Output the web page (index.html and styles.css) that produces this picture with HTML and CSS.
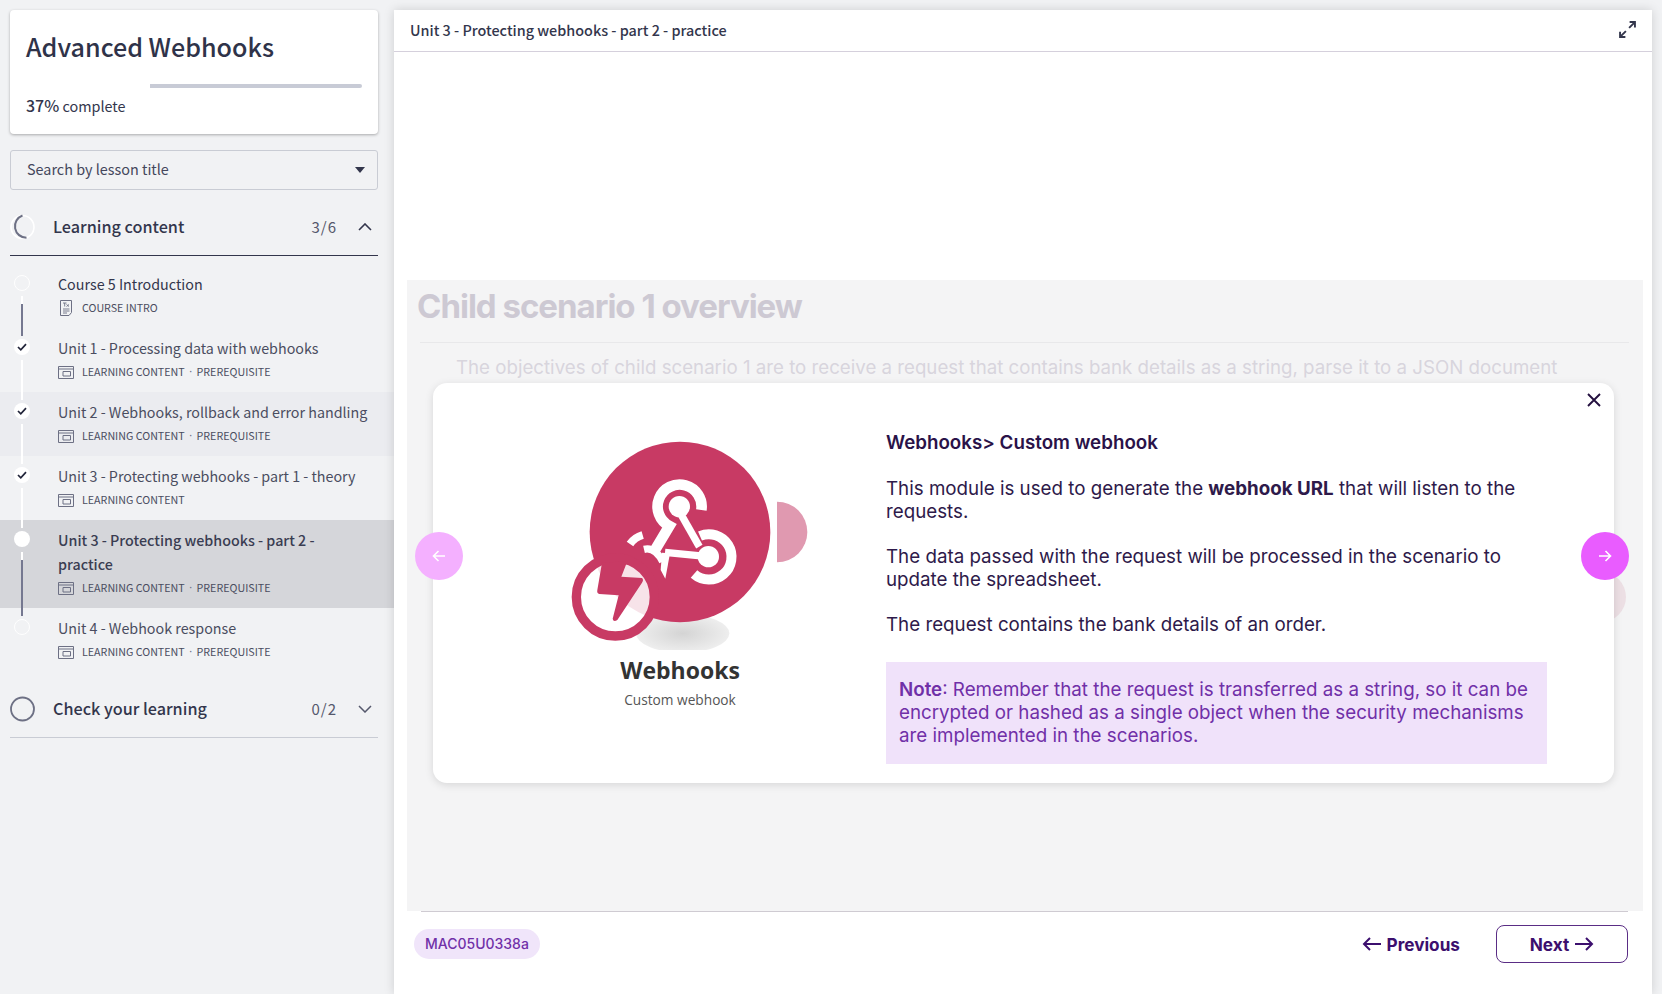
FILE: index.html
```html
<!DOCTYPE html>
<html lang="en">
<head>
    <meta charset="UTF-8">
    <meta name="viewport" content="width=device-width, initial-scale=1.0">
    <title>Advanced Webhooks</title>
    <link rel="stylesheet" href="styles.css">
</head>
<body>
    <aside class="sidebar">
        <div class="course-card">
            <h1>Advanced Webhooks</h1>
            <div class="progress"><div class="progress-done"></div><div class="progress-left"></div></div>
            <p class="progress-text"><b>37%</b> complete</p>
        </div>

        <div class="search-box">
            <span>Search by lesson title</span>
            <span class="search-caret"></span>
        </div>

        <div class="section-head section-open">
            <svg class="section-ring" width="26" height="26" viewBox="0 0 26 26"><circle cx="12.500" cy="13" r="11.5" fill="none" stroke="#fff" stroke-width="1.6"/><path d="M16.500 23.800A11.500 11.500 0 0 1 12.500 1.500" fill="none" stroke="#6d7084" stroke-width="2"/></svg>
            <span class="section-title">Learning content</span>
            <span class="section-count">3/6</span>
            <svg class="chevron" width="14" height="8" viewBox="0 0 14 8"><path d="M1 7l6-6 6 6" fill="none" stroke="#33364c" stroke-width="1.6"/></svg>
        </div>

        <ul class="lessons">
            <li class="lesson">
                <div class="rail"><span class="dot dot-empty"></span><span class="rail-line line-next"></span></div>
                <div class="lesson-body">
                    <div class="lesson-title lesson-title-dark">Course 5 Introduction</div>
                    <div class="lesson-meta">
                        <svg class="meta-icon" width="16" height="16" viewBox="0 0 16 16"><path d="M2.5.5h11v12l-2.500 3h-8.500z" fill="none" stroke="#6d7084"/><path d="M5 3h3.500M6.700 3v3.500M8.500 4.500l2.500 2M11 4.500l-2.500 2M5 9h6.500M5 11h6.500M5 13h4" fill="none" stroke="#6d7084" stroke-width=".9"/></svg>
                        <span>COURSE INTRO</span>
                    </div>
                </div>
            </li>
            <li class="lesson">
                <div class="rail"><span class="dot"><svg width="10" height="8" viewBox="0 0 10 8"><path d="M1 4l2.800 2.800L9 1.200" fill="none" stroke="#22253a" stroke-width="1.700"/></svg></span><span class="rail-line"></span></div>
                <div class="lesson-body">
                    <div class="lesson-title">Unit 1 - Processing data with webhooks</div>
                    <div class="lesson-meta">
                        <svg class="meta-icon" width="16" height="13" viewBox="0 0 16 13"><path d="M.5.500h15v12H.500zM.5 3h15M5 5.500h7.500V10H5z" fill="none" stroke="#6d7084"/></svg>
                        <span>LEARNING CONTENT</span><span class="meta-sep">·</span><span>PREREQUISITE</span>
                    </div>
                </div>
            </li>
            <li class="lesson lesson-hover">
                <div class="rail"><span class="dot"><svg width="10" height="8" viewBox="0 0 10 8"><path d="M1 4l2.800 2.800L9 1.200" fill="none" stroke="#22253a" stroke-width="1.700"/></svg></span><span class="rail-line"></span></div>
                <div class="lesson-body">
                    <div class="lesson-title">Unit 2 - Webhooks, rollback and error handling</div>
                    <div class="lesson-meta">
                        <svg class="meta-icon" width="16" height="13" viewBox="0 0 16 13"><path d="M.5.500h15v12H.500zM.5 3h15M5 5.500h7.500V10H5z" fill="none" stroke="#6d7084"/></svg>
                        <span>LEARNING CONTENT</span><span class="meta-sep">·</span><span>PREREQUISITE</span>
                    </div>
                </div>
            </li>
            <li class="lesson">
                <div class="rail"><span class="dot"><svg width="10" height="8" viewBox="0 0 10 8"><path d="M1 4l2.800 2.800L9 1.200" fill="none" stroke="#22253a" stroke-width="1.700"/></svg></span><span class="rail-line"></span></div>
                <div class="lesson-body">
                    <div class="lesson-title">Unit 3 - Protecting webhooks - part 1 - theory</div>
                    <div class="lesson-meta">
                        <svg class="meta-icon" width="16" height="13" viewBox="0 0 16 13"><path d="M.5.500h15v12H.500zM.5 3h15M5 5.500h7.500V10H5z" fill="none" stroke="#6d7084"/></svg>
                        <span>LEARNING CONTENT</span>
                    </div>
                </div>
            </li>
            <li class="lesson lesson-active">
                <div class="rail"><span class="dot"></span><span class="rail-line line-next line-long"></span></div>
                <div class="lesson-body">
                    <div class="lesson-title">Unit 3 - Protecting webhooks - part 2 -<br>practice</div>
                    <div class="lesson-meta">
                        <svg class="meta-icon" width="16" height="13" viewBox="0 0 16 13"><path d="M.5.500h15v12H.500zM.5 3h15M5 5.500h7.500V10H5z" fill="none" stroke="#6d7084"/></svg>
                        <span>LEARNING CONTENT</span><span class="meta-sep">·</span><span>PREREQUISITE</span>
                    </div>
                </div>
            </li>
            <li class="lesson">
                <div class="rail"><span class="dot dot-empty"></span></div>
                <div class="lesson-body">
                    <div class="lesson-title">Unit 4 - Webhook response</div>
                    <div class="lesson-meta">
                        <svg class="meta-icon" width="16" height="13" viewBox="0 0 16 13"><path d="M.5.500h15v12H.500zM.5 3h15M5 5.500h7.500V10H5z" fill="none" stroke="#6d7084"/></svg>
                        <span>LEARNING CONTENT</span><span class="meta-sep">·</span><span>PREREQUISITE</span>
                    </div>
                </div>
            </li>
        </ul>

        <div class="section-head">
            <svg class="section-ring" width="26" height="26" viewBox="0 0 26 26"><circle cx="12.500" cy="13" r="11.500" fill="none" stroke="#6d7084" stroke-width="1.800"/></svg>
            <span class="section-title">Check your learning</span>
            <span class="section-count">0/2</span>
            <svg class="chevron" width="14" height="8" viewBox="0 0 14 8"><path d="M1 1l6 6 6-6" fill="none" stroke="#55586c" stroke-width="1.500"/></svg>
        </div>
    </aside>

    <main class="content">
        <header class="content-head">
            <span>Unit 3 - Protecting webhooks - part 2 - practice</span>
            <svg width="17" height="17" viewBox="0 0 16 16"><path d="M9.500 6.500L15 1M10 1h5v5M6.500 9.500L1 15M1 10v5h5" fill="none" stroke="#33364c" stroke-width="1.800"/></svg>
        </header>

        <div class="content-gap"></div>

        <section class="slide">
            <h2>Child scenario 1 overview</h2>
            <hr class="slide-rule">
            <p class="slide-text">The objectives of child scenario 1 are to receive a request that contains bank details as a string, parse it to a JSON document</p>
            <span class="hidden-marker"></span>

            <div class="modal">
                <div class="modal-left">
                    <svg class="webhook-art" width="280" height="230" viewBox="0 0 840 690">
                        <defs>
                            <radialGradient id="shadow"><stop offset="0" stop-color="#d4d4d4"/><stop offset="1" stop-color="#eeeeee"/></radialGradient>
                        </defs>
                        <ellipse cx="428" cy="640" rx="140" ry="58" fill="url(#shadow)"/>
                        <path d="M711 245A91 91 0 0 1 711 427Z" fill="#e099b0"/>
                        <circle cx="420" cy="336" r="271" fill="#c83a64"/>
                        <g fill="none" stroke="#fff">
                            <path d="M484 270A66 66 0 1 0 388 318L345 390" stroke-width="32"/>
                            <path d="M410 260L478 380" stroke-width="22"/>
                            <path d="M480 348A68 68 0 1 1 462 462" stroke-width="30"/>
                            <path d="M505 410L375 397" stroke-width="22"/>
                            <path d="M270 372A70 70 0 0 1 308 345" stroke-width="24"/>
                            <path d="M312 388Q345 380 368 425" stroke-width="22"/>
                        </g>
                        <circle cx="418" cy="260" r="32" fill="#fff"/>
                        <circle cx="505" cy="410" r="32" fill="#fff"/>
                        <path d="M366 398L390 400L376 476L362 450Z" fill="#fff"/>
                        <circle cx="226" cy="531" r="117" fill="#fff" fill-opacity=".86" stroke="#c83a64" stroke-width="28"/>
                        <path d="M186 428L262 424L244 470L306 474Q312 480 306 488L232 600Q220 608 218 596L236 526L178 522Q170 520 172 510Z" fill="#c83a64"/>
                    </svg>
                    <div class="art-title">Webhooks</div>
                    <div class="art-sub">Custom webhook</div>
                </div>
                <div class="modal-right">
                    <h3>Webhooks&gt; Custom webhook</h3>
                    <p>This module is used to generate the <b>webhook URL</b> that will listen to the requests.</p>
                    <p>The data passed with the request will be processed in the scenario to update the spreadsheet.</p>
                    <p>The request contains the bank details of an order.</p>
                    <div class="note"><b>Note</b>: Remember that the request is transferred as a string, so it can be encrypted or hashed as a single object when the security mechanisms are implemented in the scenarios.</div>
                </div>
                <svg class="modal-close" width="14" height="14" viewBox="0 0 14 14"><path d="M1 1l12 12M13 1L1 13" fill="none" stroke="#24103f" stroke-width="1.900"/></svg>
            </div>

            <button class="round-btn round-prev">
                <svg width="14" height="12" viewBox="0 0 14 12"><path d="M13 6H1.500M6.500 1l-5 5 5 5" fill="none" stroke="#fff" stroke-width="1.600"/></svg>
            </button>
            <button class="round-btn round-next">
                <svg width="14" height="12" viewBox="0 0 14 12"><path d="M1 6h11.500M7.500 1l5 5-5 5" fill="none" stroke="#fff" stroke-width="1.600"/></svg>
            </button>
        </section>

        <footer class="content-foot">
            <span class="code-pill">MAC05U0338a</span>
            <div class="foot-nav">
                <a class="nav-prev">
                    <svg width="20" height="14" viewBox="0 0 20 14"><path d="M19 7H2M8 1L2 7l6 6" fill="none" stroke="#3c0f6e" stroke-width="2"/></svg>
                    Previous
                </a>
                <a class="nav-next">
                    Next
                    <svg width="20" height="14" viewBox="0 0 20 14"><path d="M1 7h17M12 1l6 6-6 6" fill="none" stroke="#3c0f6e" stroke-width="2"/></svg>
                </a>
            </div>
        </footer>
    </main>
</body>
</html>
```

FILE: styles.css
```css
* {
    box-sizing: border-box;
}

html,
body {
    height: 100%;
}

body {
    margin: 0;
    display: flex;
    overflow: hidden;
    background-color: #f1f2f4;
    font-family: "Noto Sans CJK SC", "Noto Sans", sans-serif;
    color: #33364c;
}

/* sidebar */
.sidebar {
    width: 394px;
    flex-shrink: 0;
    padding-top: 10px;
}

.course-card {
    margin: 0 16px 0 10px;
    height: 124px;
    padding: 16px 16px 0;
    background-color: #fff;
    border-radius: 4px;
    box-shadow: 0 1px 3px rgba(0, 0, 0, 0.3);
}

.course-card h1 {
    margin: 0;
    font-size: 25.100px;
    line-height: 40px;
    font-weight: 500;
    color: #2f3349;
}

.progress {
    display: flex;
    height: 4px;
    margin-top: 18px;
}

.progress-done {
    width: 37%;
    background-color: #fff;
}

.progress-left {
    flex: 1;
    background-color: #c8cbd6;
    border-radius: 0 2px 2px 0;
}

.progress-text {
    margin: 5px 0 0;
    font-size: 14.4px;
    line-height: 24px;
}

.progress-text b {
    font-size: 16px;
    font-weight: 500;
}

.search-box {
    display: flex;
    align-items: center;
    justify-content: space-between;
    height: 40px;
    margin: 16px 16px 0 10px;
    padding: 0 12px 4px 16px;
    border: 1px solid #c9ccd4;
    border-radius: 3px;
    font-size: 14.4px;
    color: #44475c;
}

.search-caret {
    width: 0;
    height: 0;
    margin-top: 4px;
    border-left: 5px solid transparent;
    border-right: 5px solid transparent;
    border-top: 6px solid #33364c;
}

.section-head {
    display: flex;
    align-items: center;
    height: 53px;
    margin: 13px 16px 0 10px;
    padding-bottom: 5px;
    border-bottom: 1px solid #c9ccd4;
}

.section-open {
    border-bottom-color: #33364c;
}

.section-ring {
    flex-shrink: 0;
}

.section-title {
    flex: 1;
    margin-left: 17px;
    margin-bottom: 2px;
    font-size: 16.2px;
    font-weight: 500;
}

.section-count {
    margin-right: 21px;
    font-size: 15px;
    letter-spacing: 1px;
    color: #55586c;
}

.chevron {
    margin-right: 6px;
}

.lessons {
    list-style: none;
    margin: 8px 0 0;
    padding: 0;
}

.lesson {
    display: flex;
    padding: 8px 16px 8px 14px;
}

.lesson-hover {
    background-color: #ebecf0;
}

.lesson-active {
    background-color: #d5d6da;
}

.rail {
    display: flex;
    flex-direction: column;
    align-items: center;
    width: 16px;
    height: 0;
    margin-top: 3px;
    margin-right: 28px;
}

.dot {
    display: flex;
    align-items: center;
    justify-content: center;
    flex-shrink: 0;
    width: 16px;
    height: 16px;
    border-radius: 50%;
    background-color: #fff;
}

.dot-empty {
    background-color: transparent;
    border: 1px solid #fff;
}

.rail-line {
    flex-shrink: 0;
    width: 2px;
    height: 40px;
    margin-top: 5px;
    background-color: #fff;
}

.line-next {
    background: linear-gradient(#fff 8px, #757890 8px);
}

.line-long {
    height: 64px;
}

.lesson-title {
    font-size: 14.3px;
    line-height: 24px;
    white-space: nowrap;
    color: #4a4d60;
}

.lesson-title-dark {
    color: #33364c;
}

.lesson-active .lesson-title {
    font-weight: 500;
    color: #3a3d52;
}

.lesson-meta {
    display: flex;
    align-items: center;
    height: 24px;
    padding-bottom: 2px;
    font-size: 10.7px;
    color: #4a4d60;
}

.meta-icon {
    margin-right: 8px;
    margin-top: 2px;
}

.meta-sep {
    margin: 0 4.500px;
    font-family: "Noto Sans", sans-serif;
    color: #6d7084;
}

/* main panel */
.content {
    display: flex;
    flex-direction: column;
    width: 1258px;
    margin-top: 10px;
    background-color: #fff;
    box-shadow: 0 0 10px rgba(0, 0, 0, 0.15);
}

.content-head {
    display: flex;
    align-items: center;
    justify-content: space-between;
    flex-shrink: 0;
    height: 42px;
    padding: 0 16px 2px;
    border-bottom: 1px solid #d5d0dc;
    font-size: 14.4px;
    font-weight: 500;
}

.content-gap {
    height: 228px;
    flex-shrink: 0;
}

.slide {
    position: relative;
    flex-shrink: 0;
    height: 631px;
    margin: 0 9px 0 13px;
    padding: 0 14px;
    background-color: #f4f4f5;
    font-family: Inter, "Liberation Sans", sans-serif;
}

.slide h2 {
    margin: 0 0 0 -4px;
    font-size: 33px;
    line-height: 52px;
    font-weight: 700;
    letter-spacing: -1px;
    color: #cdc9d3;
}

.slide-rule {
    margin: 10px 0 0 -1px;
    border: 0;
    border-top: 1px solid #e8e8ea;
}

.slide-text {
    margin: 13px 0 0 35px;
    font-size: 18.7px;
    line-height: 23px;
    white-space: nowrap;
    color: #d8d5dd;
}

.hidden-marker {
    position: absolute;
    left: 1169px;
    top: 292px;
    width: 50px;
    height: 50px;
    border-radius: 50%;
    background-color: #ecdfe4;
}

.modal {
    position: absolute;
    left: 26px;
    top: 103px;
    display: flex;
    width: 1181px;
    height: 400px;
    background-color: #fff;
    border-radius: 14px;
    box-shadow: 0 2px 8px rgba(0, 0, 0, 0.12);
}

.modal-left {
    width: 453px;
    padding: 37px 0 0 107px;
    text-align: center;
    font-family: "Open Sans", sans-serif;
}

.webhook-art {
    display: block;
}

.art-title {
    width: 280px;
    margin-top: 3px;
    font-size: 23px;
    line-height: 34px;
    font-weight: 700;
    color: #333;
}

.art-sub {
    width: 280px;
    margin-top: 3px;
    font-size: 13.7px;
    line-height: 20px;
    color: #555;
}

.modal-right {
    width: 661px;
    padding-top: 48px;
    font-size: 18.75px;
    line-height: 23px;
    color: #2e1a4a;
}

.modal-right h3 {
    margin: 0 0 23px;
    font-size: 18.75px;
    line-height: 23px;
    font-weight: 600;
    color: #2a1248;
}

.modal-right p {
    margin: 0 0 22px;
}

.modal-right p b {
    font-weight: 700;
}

.note {
    margin-top: 26px;
    padding: 16px 13px 17px;
    background-color: #f0e2fa;
    color: #7030a8;
}

.note b {
    font-weight: 600;
}

.modal-close {
    position: absolute;
    right: 13px;
    top: 10px;
}

.round-btn {
    position: absolute;
    top: 252px;
    display: flex;
    align-items: center;
    justify-content: center;
    width: 48px;
    height: 48px;
    padding: 0;
    border: none;
    border-radius: 50%;
}

.round-prev {
    left: 8px;
    background-color: #f4b0ff;
}

.round-next {
    left: 1174px;
    background-color: #e95cff;
}

/* footer */
.content-foot {
    position: relative;
    display: flex;
    align-items: center;
    justify-content: space-between;
    flex: 1;
    margin: 0 24px 0 20px;
    padding: 0 0 17px;
    font-family: Inter, "Liberation Sans", sans-serif;
}

.content-foot::before {
    content: "";
    position: absolute;
    left: 7px;
    right: 0;
    top: 0;
    border-top: 1px solid #cfcbd2;
}

.code-pill {
    padding: 0 11px;
    height: 30px;
    line-height: 30px;
    font-size: 14px;
    font-weight: 500;
    border-radius: 15px;
    background-color: #f0e5fa;
    color: #7030a8;
}

.foot-nav {
    display: flex;
    align-items: center;
    gap: 36px;
    font-size: 17.2px;
    font-weight: 700;
    color: #3c0f6e;
}

.nav-prev,
.nav-next {
    display: flex;
    align-items: center;
    justify-content: center;
    gap: 5px;
}

.nav-next {
    width: 132px;
    height: 38px;
    border: 1.500px solid #5a2d85;
    border-radius: 8px;
}
```
